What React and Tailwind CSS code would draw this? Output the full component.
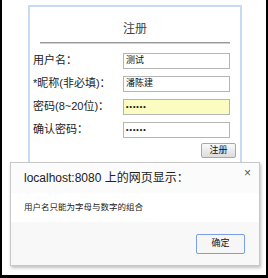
const font = { fontFamily: '"Liberation Sans", "Noto Sans CJK SC", sans-serif' };

function Row({ label, value, password, autofill }) {
  return (
    <div className="flex items-center h-[23px]">
      <span className="w-[90px] text-[11px] text-[#222] leading-none">{label}</span>
      <div
        className={
          'w-[107px] h-[16px] border border-[#b5b5b5] flex items-center px-[2px] text-[9px] leading-none text-[#111] ' +
          (autofill ? 'bg-[#fbfdc0]' : 'bg-white')
        }
      >
        {password ? <span className="tracking-[1px] text-[7px] font-bold leading-none">••••••</span> : value}
      </div>
    </div>
  );
}

export default function App() {
  return (
    <div
      className="relative w-[268px] h-[278px] bg-white border-l-2 border-r-2 border-b-[3px] border-black overflow-hidden"
      style={font}
    >
      <div className="ml-[26px] mt-[5px] w-[214px] h-[200px] border-2 border-[#c8daf2] px-[3px]">
        <div className="h-[34px] flex items-end justify-center pb-[3px] text-[12px] text-[#444]">注册</div>
        <div className="mx-[7px] mt-[1px] h-[2px] bg-[#9a9a9a] border-b border-[#d0d0d0]" />
        <div className="mt-[5px]">
          <Row label="用户名：" value="测试" />
          <Row label="*昵称(非必填)：" value="潘陈建" />
          <Row label="密码(8~20位)：" password autofill />
          <Row label="确认密码：" password />
        </div>
        <div className="flex justify-end pr-[1px] mt-[2px]">
          <button className="w-[35px] h-[15px] border border-[#a8a8a8] rounded-[2px] bg-gradient-to-b from-[#fafafa] to-[#dcdcdc] text-[9px] leading-none text-[#111]">
            注册
          </button>
        </div>
      </div>

      <div className="absolute left-[8px] top-[162px] w-[250px] h-[104px] border border-[#c8c8c8] shadow-[1px_2px_3px_rgba(0,0,0,0.25)] bg-white flex flex-col">
        <div className="h-[30px] bg-[#fbfbfb] flex items-center justify-between pl-[13px] pr-[8px]">
          <span className="text-[12px] text-[#222]">localhost:8080 上的网页显示：</span>
          <span className="text-[12px] text-[#555] leading-none -mt-[10px]">×</span>
        </div>
        <div className="h-[29px] flex items-center pl-[13px] text-[8.5px] text-[#222]">用户名只能为字母与数字的组合</div>
        <div className="flex-1 bg-[#f8f8f8] flex items-center justify-end pr-[14px]">
          <button className="w-[49px] h-[20px] border border-[#7b9fe6] rounded-[2px] bg-[#f6f6f6] text-[9px] text-[#111] leading-none">
            确定
          </button>
        </div>
      </div>
    </div>
  );
}
